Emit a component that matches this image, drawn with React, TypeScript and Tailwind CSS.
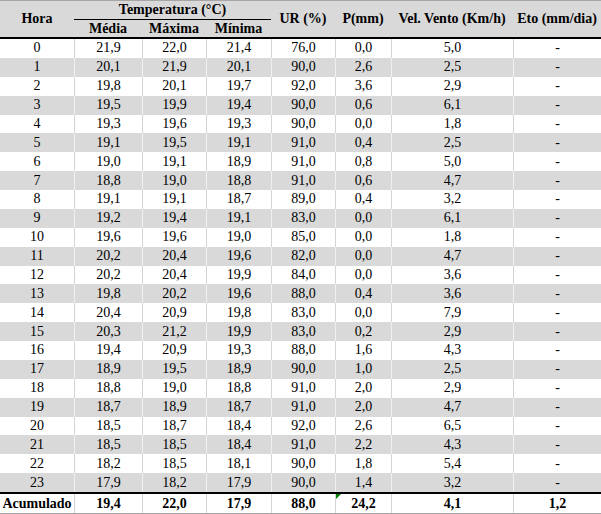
import React from "react";

const rows: string[][] = [
  ["0", "21,9", "22,0", "21,4", "76,0", "0,0", "5,0", "-"],
  ["1", "20,1", "21,9", "20,1", "90,0", "2,6", "2,5", "-"],
  ["2", "19,8", "20,1", "19,7", "92,0", "3,6", "2,9", "-"],
  ["3", "19,5", "19,9", "19,4", "90,0", "0,6", "6,1", "-"],
  ["4", "19,3", "19,6", "19,3", "90,0", "0,0", "1,8", "-"],
  ["5", "19,1", "19,5", "19,1", "91,0", "0,4", "2,5", "-"],
  ["6", "19,0", "19,1", "18,9", "91,0", "0,8", "5,0", "-"],
  ["7", "18,8", "19,0", "18,8", "91,0", "0,6", "4,7", "-"],
  ["8", "19,1", "19,1", "18,7", "89,0", "0,4", "3,2", "-"],
  ["9", "19,2", "19,4", "19,1", "83,0", "0,0", "6,1", "-"],
  ["10", "19,6", "19,6", "19,0", "85,0", "0,0", "1,8", "-"],
  ["11", "20,2", "20,4", "19,6", "82,0", "0,0", "4,7", "-"],
  ["12", "20,2", "20,4", "19,9", "84,0", "0,0", "3,6", "-"],
  ["13", "19,8", "20,2", "19,6", "88,0", "0,4", "3,6", "-"],
  ["14", "20,4", "20,9", "19,8", "83,0", "0,0", "7,9", "-"],
  ["15", "20,3", "21,2", "19,9", "83,0", "0,2", "2,9", "-"],
  ["16", "19,4", "20,9", "19,3", "88,0", "1,6", "4,3", "-"],
  ["17", "18,9", "19,5", "18,9", "90,0", "1,0", "2,5", "-"],
  ["18", "18,8", "19,0", "18,8", "91,0", "2,0", "2,9", "-"],
  ["19", "18,7", "18,9", "18,7", "91,0", "2,0", "4,7", "-"],
  ["20", "18,5", "18,7", "18,4", "92,0", "2,6", "6,5", "-"],
  ["21", "18,5", "18,5", "18,4", "91,0", "2,2", "4,3", "-"],
  ["22", "18,2", "18,5", "18,1", "90,0", "1,8", "5,4", "-"],
  ["23", "17,9", "18,2", "17,9", "90,0", "1,4", "3,2", "-"],
];

const total = ["Acumulado", "19,4", "22,0", "17,9", "88,0", "24,2", "4,1", "1,2"];

const cols = "grid grid-cols-[74px_68px_64px_65px_64px_56px_122px_88px]";

export default function App() {
  return (
    <div className="w-[601px] h-[514px] bg-white font-['Liberation_Serif','Times_New_Roman',serif] text-[14px] leading-none text-black border-t border-b border-[#a6a6a6] overflow-hidden">
      <div className={`${cols} grid-rows-[19px_17px] h-[38px] bg-[#d9d9d9] border-b-2 border-black font-bold`}>
        <div className="row-span-2 flex items-center justify-center">Hora</div>
        <div className="col-span-3 flex items-center justify-center border-b border-black">Temperatura (°C)</div>
        <div className="row-span-2 flex items-center justify-center">UR (%)</div>
        <div className="row-span-2 flex items-center justify-center">P(mm)</div>
        <div className="row-span-2 flex items-center justify-center">Vel. Vento (Km/h)</div>
        <div className="row-span-2 flex items-center justify-center">Eto (mm/dia)</div>
        <div className="col-start-2 row-start-2 flex items-center justify-center">Média</div>
        <div className="col-start-3 row-start-2 flex items-center justify-center">Máxima</div>
        <div className="col-start-4 row-start-2 flex items-center justify-center">Mínima</div>
      </div>
      {rows.map((r, i) => (
        <div
          key={i}
          className={`${cols} h-[18.875px] ${i % 2 === 1 ? "bg-[#d9d9d9]" : "bg-white"}`}
        >
          {r.map((c, j) => (
            <div
              key={j}
              className={`flex items-center justify-center ${
                j > 0 ? (i % 2 === 1 ? "border-l border-[#f0f0f0]" : "border-l border-[#d4d4d4]") : ""
              }`}
            >
              {c}
            </div>
          ))}
        </div>
      ))}
      <div className={`${cols} h-[21px] border-t-2 border-black font-bold bg-white`}>
        {total.map((c, j) => (
          <div
            key={j}
            className={`relative flex items-center justify-center ${j > 0 ? "border-l border-[#d4d4d4]" : ""}`}
          >
            {j === 5 && (
              <span className="absolute left-0 top-0 w-0 h-0 border-t-[5px] border-r-[5px] border-t-[#008000] border-r-transparent" />
            )}
            {c}
          </div>
        ))}
      </div>
    </div>
  );
}
